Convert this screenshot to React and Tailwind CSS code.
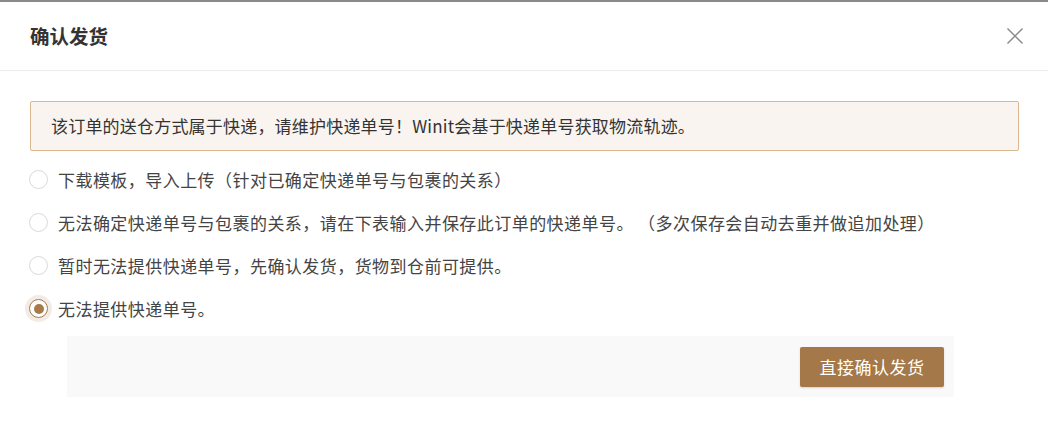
import { useState } from 'react';

const options = [
  '下载模板，导入上传（针对已确定快递单号与包裹的关系）',
  '无法确定快递单号与包裹的关系，请在下表输入并保存此订单的快递单号。 （多次保存会自动去重并做追加处理）',
  '暂时无法提供快递单号，先确认发货，货物到仓前可提供。',
  '无法提供快递单号。',
];

function Radio({ checked }) {
  return (
    <span
      className={
        checked
          ? 'flex h-[19px] w-[19px] shrink-0 items-center justify-center rounded-full border border-[#a67a4b] bg-white shadow-[0_0_0_4px_#f3ece5]'
          : 'flex h-[19px] w-[19px] shrink-0 items-center justify-center rounded-full border border-[#d9d9d9] bg-white'
      }
    >
      {checked && <span className="h-[10px] w-[10px] rounded-full bg-[#a67a4b]" />}
    </span>
  );
}

export default function App() {
  const [selected, setSelected] = useState(3);

  return (
    <div
      className="h-[439px] w-[1048px] overflow-hidden bg-white text-[#333]"
      style={{ fontFamily: '"Microsoft YaHei", "Noto Sans CJK SC", "Noto Sans", sans-serif' }}
    >
      <div className="h-[2px] bg-[#8a8a8a]" />
      <div className="flex h-[69px] items-center justify-between border-b border-[#ececec] pl-[30px] pr-[24px]">
        <h2 className="text-[19.5px] font-bold text-[#333]">确认发货</h2>
        <button className="text-[#8c8c8c]">
          <svg width="18" height="18" viewBox="0 0 18 18" fill="none" stroke="currentColor" strokeWidth="1.5">
            <path d="M1.5 1.5 16.5 16.5M16.5 1.5 1.5 16.5" />
          </svg>
        </button>
      </div>

      <div className="pt-[30px]">
        <div className="ml-[30px] flex h-[50px] w-[989px] items-center rounded-[2px] border border-[#dab791] bg-[#f9f4f0] px-[20px] text-[17px] tracking-[0.2px] text-[#333]">
          该订单的送仓方式属于快递，请维护快递单号！Winit会基于快递单号获取物流轨迹。
        </div>

        <div className="mt-[7px] flex flex-col">
          {options.map((label, i) => (
            <label
              key={i}
              onClick={() => setSelected(i)}
              className="flex h-[43px] cursor-pointer items-center gap-[10px] pl-[29px] text-[17px] tracking-[0.45px] text-[#444]"
            >
              <Radio checked={selected === i} />
              <span>{label}</span>
            </label>
          ))}
        </div>

        <div className="ml-[67px] mt-[6px] flex h-[61px] w-[887px] items-center justify-end bg-[#f9f9f9] pr-[10px]">
          <button className="h-[40px] w-[144px] rounded-[2px] bg-[#a47848] text-[17px] tracking-[0.5px] text-white shadow-[0_1px_2px_rgba(0,0,0,0.15)]">
            直接确认发货
          </button>
        </div>
      </div>
    </div>
  );
}
